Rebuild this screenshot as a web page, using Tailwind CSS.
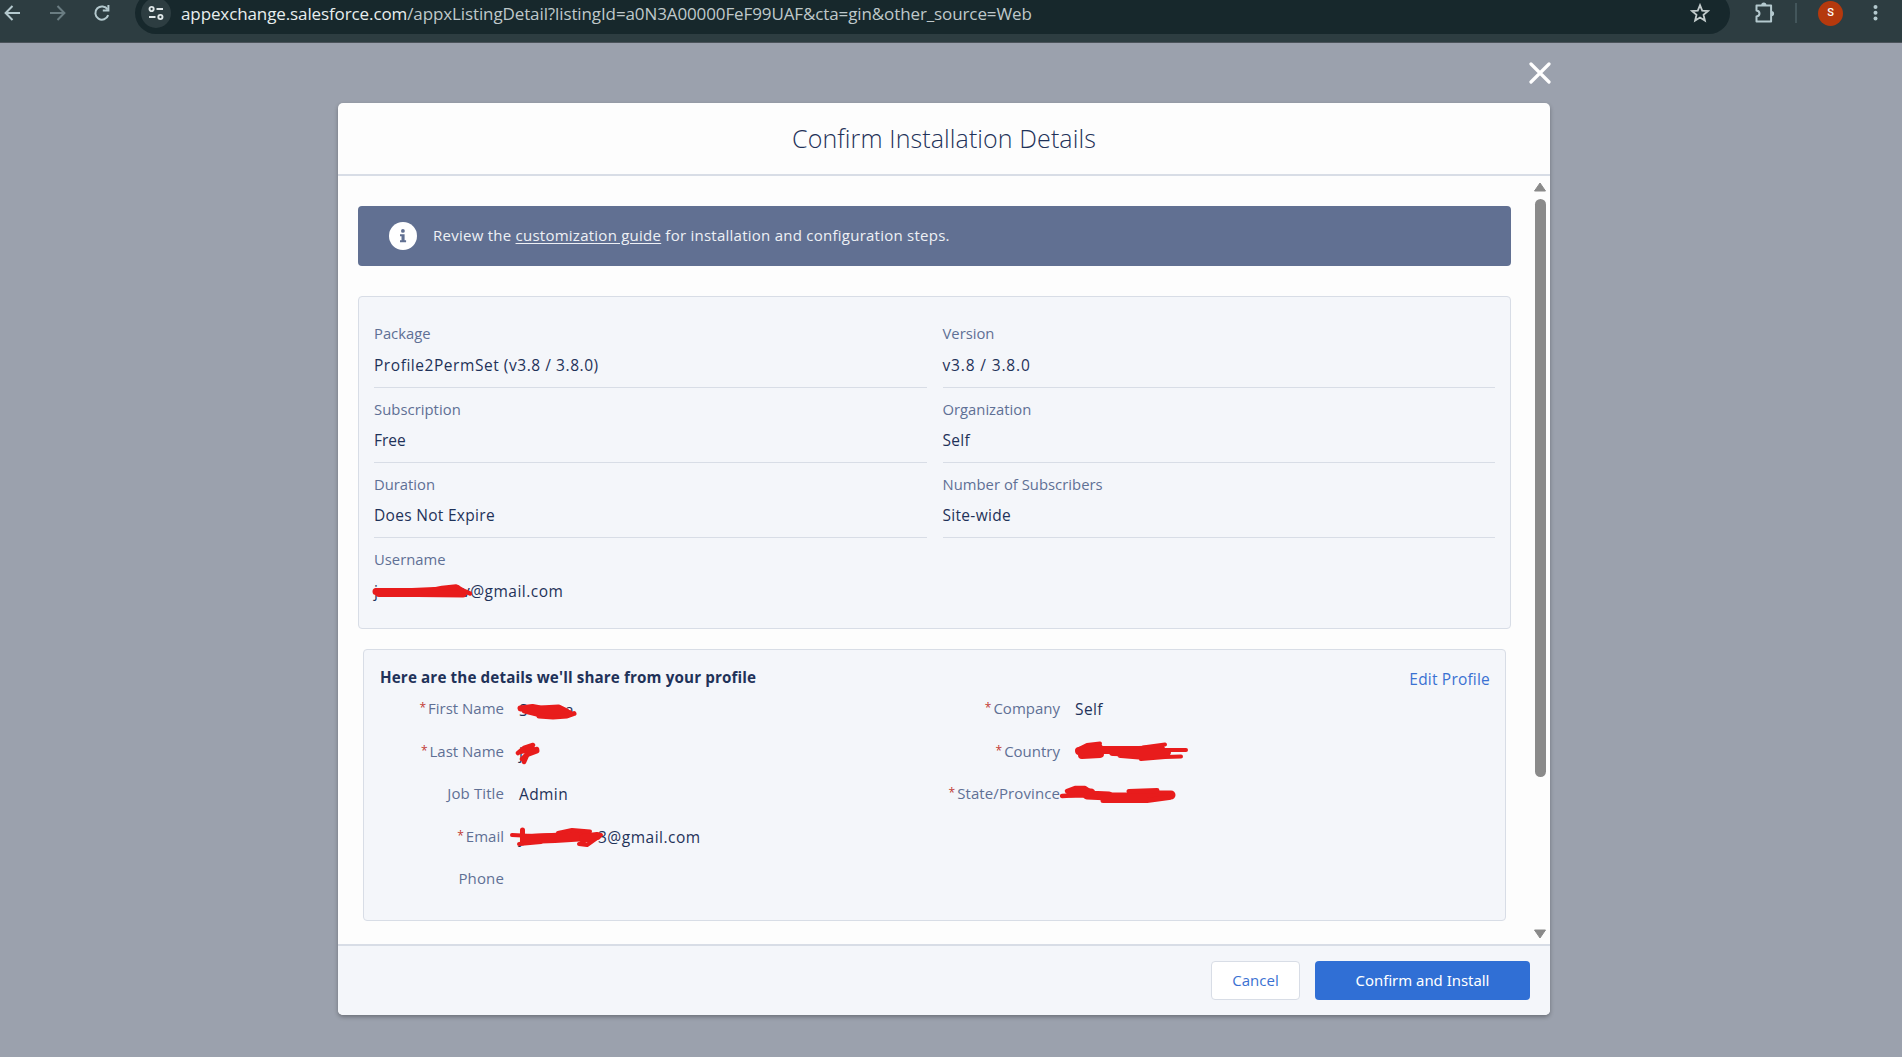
<!doctype html>
<html lang="en">
  <head>
    <meta charset="UTF-8" />
    <title>Confirm Installation Details</title>
    <script src="https://cdn.jsdelivr.net/npm/@tailwindcss/browser@4"></script>
  </head>
  <body class="h-screen overflow-hidden bg-[#9ba1ad] font-['Open_Sans','Noto_Sans',sans-serif] text-[#1f3259]">
    <!-- browser toolbar -->
    <header class="flex h-[43px] items-start overflow-hidden border-b border-[#4b535a] bg-[#2d3d41] text-[#b4c9ce]">
      <div class="flex h-[26px] w-[35px] items-center">
        <svg class="h-[26px] w-[26px]" viewBox="0 0 26 26" fill="none" stroke="currentColor" stroke-width="2"><path d="M20 13H6M12.5 6L5.6 13l6.9 7" /></svg>
      </div>
      <div class="flex h-[26px] w-[44px] items-center justify-center text-[#6a7d82]">
        <svg class="h-[26px] w-[26px]" viewBox="0 0 26 26" fill="none" stroke="currentColor" stroke-width="2"><path d="M6 13h14M13.5 6l6.9 7-6.9 7" /></svg>
      </div>
      <div class="flex h-[26px] w-[46px] items-center justify-center">
        <svg class="h-[26px] w-[26px]" viewBox="0 0 26 26" fill="none" stroke="currentColor" stroke-width="2"><path d="M19.2 15.2a6.6 6.6 0 1 1-.6-5.6" /><path d="M19.4 5v5.6h-5.6" /></svg>
      </div>
      <div class="-mt-2 ml-2.5 flex h-[42px] w-[1595px] items-center rounded-full bg-[#17282c] pr-5 pl-1.5">
        <div class="flex h-[30px] w-[30px] items-center justify-center rounded-full bg-[#2d3d41] text-[#dfe7e8]">
          <svg class="h-4 w-4" viewBox="0 0 16 16" fill="none" stroke="currentColor" stroke-width="1.9"><circle cx="3.6" cy="4" r="2.1" /><path d="M8.5 4H15M1 12h6.5" /><circle cx="12.4" cy="12" r="2.1" /></svg>
        </div>
        <div class="ml-[10px] flex-1 pt-0.5 text-[17px] leading-6 tracking-[-0.11px] whitespace-nowrap text-[#bfc8ca]"><span class="text-[#e8eeee]">appexchange.salesforce.com</span>/appxListingDetail?listingId=a0N3A00000FeF99UAF&amp;cta=gin&amp;other_source=Web</div>
        <svg class="h-5 w-5 text-[#c3cccd]" viewBox="0 0 20 20" fill="none" stroke="currentColor" stroke-width="1.8"><path d="M10 2.2l2.2 5.4 5.8.4-4.5 3.8 1.4 5.8L10 14.5l-4.9 3.1 1.4-5.8L2 8l5.8-.4z" /></svg>
      </div>
      <div class="flex h-[26px] items-center">
        <svg class="ml-[22px] h-6 w-6" viewBox="0 0 24 24" fill="none" stroke="currentColor" stroke-width="2"><path d="M4.5 4.6h14.6v16H4.5v-5c2.2-.3 3-1.5 3-3s-.8-2.7-3-3z" stroke-linejoin="round" /><path d="M9.2 4.2a2.6 2.6 0 0 1 5.2 0zM19.5 10a2.6 2.6 0 0 1 0 5.2z" fill="currentColor" stroke="none" /></svg>
        <div class="ml-[19px] h-5 w-0.5 bg-[#43565b]"></div>
        <div class="ml-[21px] flex h-[25px] w-[25px] items-center justify-center rounded-full bg-[#b5390d] font-[Roboto,sans-serif] text-[11px] font-medium text-white">S</div>
        <svg class="ml-[25px] h-5 w-[15px]" viewBox="0 0 15 20" fill="currentColor"><circle cx="7.5" cy="4" r="2" /><circle cx="7.5" cy="9.8" r="2" /><circle cx="7.5" cy="15.4" r="2" /></svg>
      </div>
    </header>

    <main class="relative mt-[60px] ml-[338px] w-[1212px]">
      <button class="absolute -top-[41px] right-[-1px]">
        <svg class="h-[22px] w-[22px]" viewBox="0 0 22 22" fill="none" stroke="#fff" stroke-width="3.2" stroke-linecap="round"><path d="M2 2l18 18M20 2L2 20" /></svg>
      </button>

      <div class="flex h-[912px] flex-col overflow-hidden rounded-[5px] bg-[#fdfdfd] shadow-[0_2px_4px_rgba(0,0,0,0.3)]">
        <div class="flex h-[73px] shrink-0 items-center justify-center border-b-2 border-[#d8dde6] text-[25px] font-light tracking-[0.1px]">Confirm Installation Details</div>

        <div class="flex flex-1">
          <div class="w-[1173px] pt-[30px] pl-5">
            <!-- notice -->
            <div class="flex h-[60px] items-center rounded-[4px] bg-[#617092] pl-[31px] text-[#eef0f5]">
              <svg class="h-7 w-7" viewBox="0 0 28 28"><circle cx="14" cy="14" r="14" fill="#fff" /><g fill="#617092"><circle cx="13.9" cy="8.9" r="1.9" /><path d="M11 12.2h4.6v6h1.5v2H11v-2h1.5v-4H11z" /></g></svg>
              <p class="ml-4 pb-0.5 text-[15px] leading-6 tracking-[0.25px]">Review the <a class="underline underline-offset-2">customization guide</a> for installation and configuration steps.</p>
            </div>

            <!-- package details -->
            <div class="mt-[30px] grid h-[333px] grid-cols-2 content-start gap-x-4 rounded-[4px] border border-[#d8dde6] bg-[#f4f6fa] px-[15px] pt-4 text-[15.5px] leading-6 tracking-[0.3px]">
              <div class="h-[75px] border-b border-[#d8dde6] pt-2">
                <div class="text-[14.8px] tracking-normal text-[#5f7095]">Package</div>
                <div class="mt-2 tracking-[0.55px]">Profile2PermSet (v3.8 / 3.8.0)</div>
              </div>
              <div class="h-[75px] border-b border-[#d8dde6] pt-2">
                <div class="text-[14.8px] tracking-normal text-[#5f7095]">Version</div>
                <div class="mt-2 tracking-[0.85px]">v3.8 / 3.8.0</div>
              </div>
              <div class="h-[75px] border-b border-[#d8dde6] pt-[9px]">
                <div class="text-[14.8px] tracking-[0.05px] text-[#5f7095]">Subscription</div>
                <div class="mt-[7px] tracking-normal">Free</div>
              </div>
              <div class="h-[75px] border-b border-[#d8dde6] pt-[9px]">
                <div class="text-[14.8px] tracking-normal text-[#5f7095]">Organization</div>
                <div class="mt-[7px]">Self</div>
              </div>
              <div class="h-[75px] border-b border-[#d8dde6] pt-[9px]">
                <div class="text-[14.8px] tracking-normal text-[#5f7095]">Duration</div>
                <div class="mt-[7px]">Does Not Expire</div>
              </div>
              <div class="h-[75px] border-b border-[#d8dde6] pt-[9px]">
                <div class="text-[14.8px] tracking-[0.03px] text-[#5f7095]">Number of Subscribers</div>
                <div class="mt-[7px]">Site-wide</div>
              </div>
              <div class="pt-[9px]">
                <div class="text-[14.8px] tracking-normal text-[#5f7095]">Username</div>
                <div class="relative mt-2 flex">
                  <span class="w-[88px]">j</span><span class="tracking-[0.48px]">v@gmail.com</span>
                  <svg class="absolute top-0 -left-2 h-6 w-[120px]" viewBox="0 0 120 24" fill="none" stroke="#e81c1c" stroke-linecap="round" stroke-linejoin="round"><path d="M10 12.5h36L80 11l11-1.5" stroke-width="7" /><path d="M13 14.5h38l46 .5" stroke-width="7" /><path d="M58 13l18-4 14-1.5 6 3.500 8 3.500" stroke-width="4.500" /></svg>
                </div>
              </div>
            </div>

            <!-- profile details -->
            <div class="mt-5 ml-[5px] h-[272px] w-[1143px] rounded-[4px] border border-[#d8dde6] bg-[#f4f6fa] pt-4 leading-6">
              <div class="flex h-[21px] items-center justify-between pr-[15px] pl-4">
                <h2 class="text-[15.2px] font-bold tracking-[0.13px]">Here are the details we'll share from your profile</h2>
                <a class="relative top-0.5 text-[15.5px] tracking-[0.2px] text-[#3a71d2]">Edit Profile</a>
              </div>
              <div class="flex text-[15.5px] tracking-[0.4px]">
                <div class="grid w-[556px] auto-rows-[42.5px] grid-cols-[140px_1fr] items-center gap-x-[15px]">
                  <div class="text-right text-[15px] tracking-normal text-[#5f7095]"><span class="relative -top-0.5 mr-0.5 text-xs text-[#c23934]">*</span>First Name</div>
                  <div class="relative top-0.5 flex">
                    <span class="w-[46px]">S</span><span>a</span>
                    <svg class="absolute top-0 -left-1 h-6 w-[66px]" viewBox="0 0 66 24" fill="none" stroke="#e81c1c" stroke-linecap="round" stroke-linejoin="round"><path d="M5.5 10.5l12-1.500 8 1.500 18-1 8 4" stroke-width="6" /><path d="M10 12l14 3.500 18-.5 12 .5M18 11l26 1" stroke-width="7" /><path d="M24 18l14 1 14-1 7-2.500" stroke-width="5" /></svg>
                  </div>
                  <div class="text-right text-[15px] tracking-normal text-[#5f7095]"><span class="relative -top-0.5 mr-0.5 text-xs text-[#c23934]">*</span>Last Name</div>
                  <div class="relative top-0.5">
                    j
                    <svg class="absolute -top-1 -left-1 h-8 w-8" viewBox="0 0 32 32" fill="none" stroke="#e81c1c" stroke-linecap="round" stroke-linejoin="round"><path d="M3 16l6-5 9-3M5 15l11-3M9 25l4-9 5-4M7 22l8-8 7-2" stroke-width="4.5" /><path d="M13 13l9 1-8 3" stroke-width="5" /></svg>
                  </div>
                  <div class="text-right text-[15px] tracking-[0.1px] text-[#5f7095]">Job Title</div>
                  <div class="relative top-px">Admin</div>
                  <div class="text-right text-[15px] tracking-normal text-[#5f7095]"><span class="relative -top-0.5 mr-0.5 text-xs text-[#c23934]">*</span>Email</div>
                  <div class="relative top-px flex">
                    <span class="w-[79px]">j</span><span class="tracking-[0.5px]">3@gmail.com</span>
                    <svg class="absolute -top-1 -left-[10px] h-8 w-[104px]" viewBox="0 0 104 32" fill="none" stroke="#e81c1c" stroke-linecap="round" stroke-linejoin="round"><path d="M3 14l20 1 30-1.500 38 .5" stroke-width="4" /><path d="M13.5 9v13M18 16l26-.5 36-1.500" stroke-width="5" /><path d="M18 18l28-1 32-2" stroke-width="10" /><path d="M10 23l22-2M49 12l14-3 18 1.500-4 5M92 14l-14 10-8-1 14-7" stroke-width="4" /><path d="M74 17l14-2" stroke-width="8" /></svg>
                  </div>
                  <div class="text-right text-[15px] tracking-[0.15px] text-[#5f7095]">Phone</div>
                  <div></div>
                </div>
                <div class="grid flex-1 auto-rows-[42.5px] grid-cols-[140px_1fr] items-center gap-x-[15px]">
                  <div class="text-right text-[15px] tracking-normal text-[#5f7095]"><span class="relative -top-0.5 mr-0.5 text-xs text-[#c23934]">*</span>Company</div>
                  <div class="relative top-px">Self</div>
                  <div class="text-right text-[15px] tracking-normal text-[#5f7095]"><span class="relative -top-0.5 mr-0.5 text-xs text-[#c23934]">*</span>Country</div>
                  <div class="relative h-6">
                    <svg class="absolute top-0 -left-1 h-6 w-[122px]" viewBox="0 0 122 24" fill="none" stroke="#e81c1c" stroke-linecap="round" stroke-linejoin="round"><path d="M8 10l8-4 13-1.500" stroke-width="4" /><path d="M8 12l20-3M11 16l18-1" stroke-width="8" /><path d="M28 11l40 0 22-1" stroke-width="8" /><path d="M72 8.500l22-3M90 11h25M70 20l24-2 16-.5" stroke-width="4" /><path d="M42 13l34 1 20-1M50 15l24 2 18-2" stroke-width="8" /></svg>
                  </div>
                  <div class="text-right text-[15px] tracking-[0.1px] text-[#5f7095]"><span class="relative -top-0.5 mr-0.5 text-xs text-[#c23934]">*</span>State/Province</div>
                  <div class="relative h-6">
                    <svg class="absolute top-px -left-4 h-6 w-[120px]" viewBox="0 0 120 24" fill="none" stroke="#e81c1c" stroke-linecap="round" stroke-linejoin="round"><path d="M3 14l18-1 20 1M8 9l8-3 10 0 6 4" stroke-width="4.500" /><path d="M12 11h20M28 13l22 1" stroke-width="9" /><path d="M46 15l26 0 24-2 16 0" stroke-width="9" /><path d="M44 18.500l44 0 22-3" stroke-width="5" /><path d="M70 9.500l28-1" stroke-width="5" /></svg>
                  </div>
                </div>
              </div>
            </div>
          </div>

          <!-- scrollbar -->
          <div class="mr-[3px] ml-auto flex w-[14px] flex-col items-center pt-1.5 pb-[5px]">
            <svg class="h-[10px] w-3.5" viewBox="0 0 14 10" fill="#8a8a8a"><path d="M7 1l5.5 8h-11z" stroke="#8a8a8a" stroke-linejoin="round" /></svg>
            <div class="mt-[7px] h-[578px] w-[11px] rounded-full bg-[#8a8a8a]"></div>
            <svg class="mt-auto h-[10px] w-3.5" viewBox="0 0 14 10" fill="#8a8a8a"><path d="M7 9L1.5 1h11z" stroke="#8a8a8a" stroke-linejoin="round" /></svg>
          </div>
        </div>

        <div class="flex h-[71px] shrink-0 items-start justify-end gap-[15px] border-t-2 border-[#d8dde6] bg-[#f4f6fa] pt-[15px] pr-5 text-[15px]">
          <button class="h-[39px] w-[89px] rounded-[4px] border border-[#d8dde6] bg-white text-[#3a71d2]">Cancel</button>
          <button class="h-[39px] w-[215px] rounded-[4px] bg-[#306fd5] font-['Noto_Sans',sans-serif] text-[14.9px] text-white">Confirm and Install</button>
        </div>
      </div>
    </main>
  </body>
</html>
